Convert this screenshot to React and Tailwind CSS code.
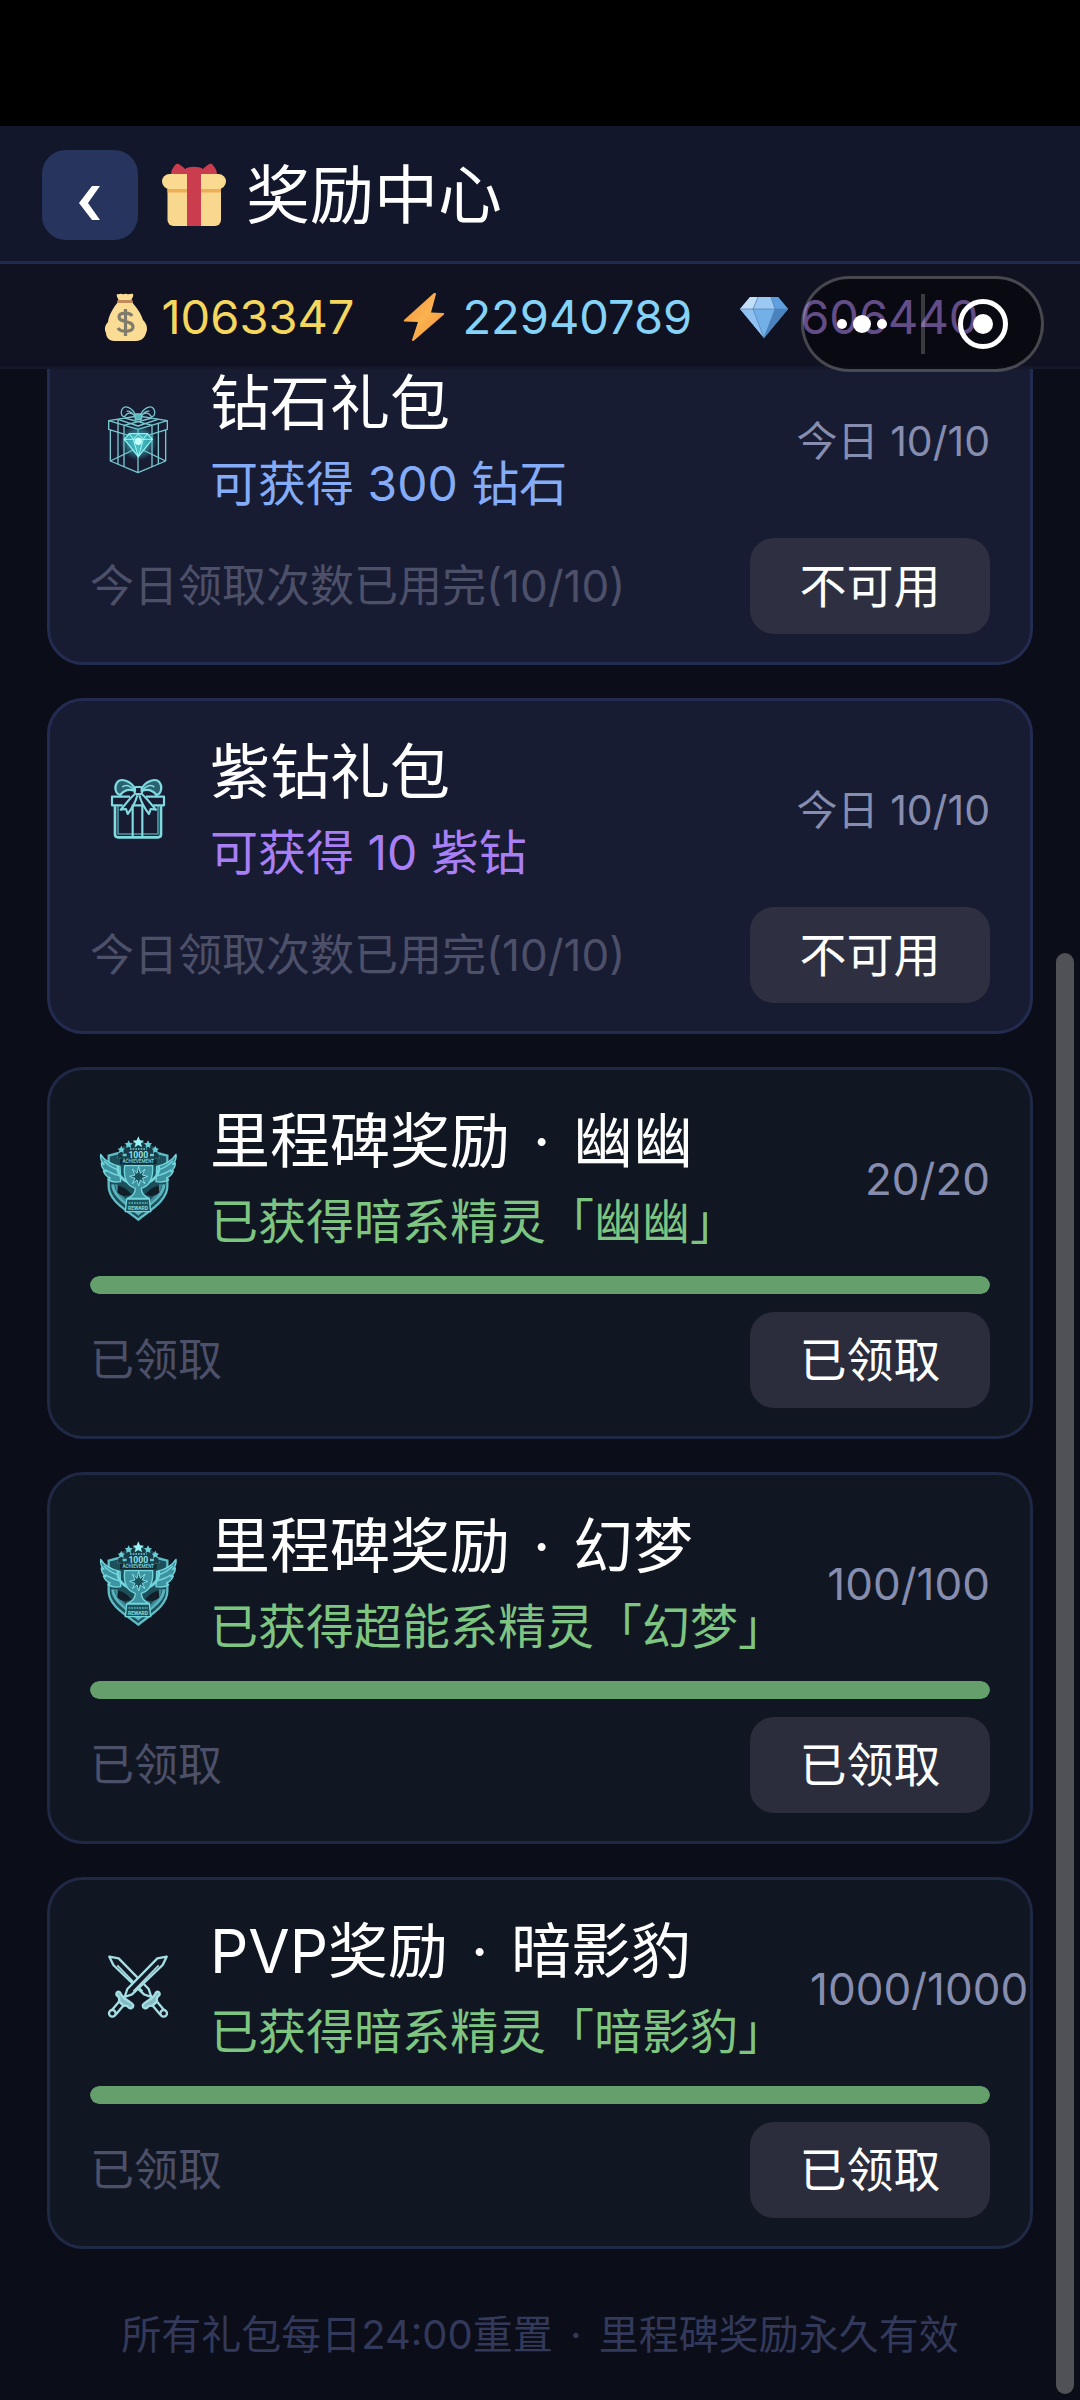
import React from "react";

function GiftEmoji() {
  return (
    <svg viewBox="0 0 64 64" className="size-16 shrink-0" aria-hidden="true">
      <rect x="5.500" y="18" width="53.500" height="45" rx="6" fill="#f8d88f" />
      <path d="M5.500 26h53.500v3.500H5.500z" fill="#eeae55" />
      <rect x="0" y="11" width="64" height="15" rx="7.500" fill="#f9da90" />
      <path d="M9 11c0-3 2-7 5-10 2-1 5 1 9 5 4-3 14-3 18 0 4-4 7-6 9-5 3 3 5 7 5 10z" fill="#c93d4e" />
      <path d="M25 11h14v52H25z" fill="#c93d4e" />
    </svg>
  );
}

function MoneyBag() {
  return (
    <svg viewBox="0 0 48 48" className="size-12 shrink-0" aria-hidden="true">
      <path d="M15 1c2 1 3-1 5 0 2 1 3-1 5 0 2 1 4-1 6 0 1 2-1 4-2 7H17c-1-3-3-5-2-7z" fill="#fbdc94" />
      <path d="M16 9h14c4 5 9 11 11 18 4 4 5 9 3 13-1 4-4 8-10 8H12c-5 0-8-4-8-8-2-4-1-8 2-11 1-8 6-15 10-20z" fill="#fbdc94" />
      <rect x="15" y="7" width="16" height="3" rx="1.500" fill="#c08a5a" />
      <path d="M30 23c-2-4-13-4-13 1 0 6 14 3 14 10 0 5-12 6-15 1M23.500 16v27" fill="none" stroke="#7f7b6d" strokeWidth="3.200" />
    </svg>
  );
}

function Bolt() {
  return (
    <svg viewBox="0 0 48 48" className="size-12 shrink-0" aria-hidden="true">
      <defs>
        <linearGradient id="bolt" x1="0" y1="0" x2="1" y2="1">
          <stop offset="0" stopColor="#f58f3c" />
          <stop offset="0.500" stopColor="#fbb350" />
          <stop offset="1" stopColor="#f08c3a" />
        </linearGradient>
      </defs>
      <path d="M32 0 2 27c-.5 1 0 1.500 1 1.500l13 .5-6 18c0 1 1 1.500 2 .5l30-26c.5-1 0-1.500-1-1.500l-12-.5L34 1c0-1-1-1.500-2-1z" fill="url(#bolt)" />
    </svg>
  );
}

function Gem() {
  return (
    <svg viewBox="0 0 48 48" className="size-12 shrink-0" aria-hidden="true">
      <path d="M10 4h28l10 12-24 29L0 16z" fill="#74b0e8" />
      <path d="M10 4h8l-5 12H0z" fill="#c3def7" />
      <path d="M18 4h13l4 12H13z" fill="#9cc9f3" />
      <path d="M31 4h7l10 12H35z" fill="#5f9fe0" />
      <path d="M0 16h13l11 29z" fill="#8fc1f1" />
      <path d="M48 16H35L24 45z" fill="#4a82bd" />
      <path d="M0 16h48M18 4l-5 12 11 29 11-29-4-12" fill="none" stroke="#4f7fb4" strokeWidth="0.700" />
    </svg>
  );
}

function DiamondBox() {
  return (
    <svg viewBox="0 9 288 288" className="size-24 shrink-0" aria-hidden="true">
      <defs>
        <radialGradient id="glow">
          <stop offset="0" stopColor="#7ff0ee" stopOpacity="0.900" />
          <stop offset="0.600" stopColor="#3fb6bd" stopOpacity="0.500" />
          <stop offset="1" stopColor="#3fb6bd" stopOpacity="0" />
        </radialGradient>
      </defs>
      <g fill="none" stroke="#76c8ce" strokeWidth="4" strokeLinejoin="round">
        <path d="M56 92l88-14 88 14-88 26zM56 92v26l88 27 88-27V92M144 118v27M61 121v92l83 35 83-35v-92M144 145v103M61 213l83-40 83 40" />
        <path d="M84 88v40v95M102 106v27v98M186 106v27v98M205 99v28v95M84 88l60 20 60-20M104 84l82 22M186 84l-84 22" />
        <path d="M138 78c-10-24-34-36-42-20-6 14 0 22 8 22 8-14 20-14 34-2zM134 78c-8-10-18-16-24-14M150 78c10-24 34-36 42-20 6 14 0 22-8 22-8-14-20-14-34-2zM154 78c8-10 18-16 24-14" />
        <rect x="135" y="72" width="20" height="17" rx="4" fill="#58b6bd" />
      </g>
      <ellipse cx="145" cy="157" rx="56" ry="54" fill="url(#glow)" />
      <path d="M118 131h54l15 17-42 52-42-52z" fill="#3fbcc4" fillOpacity="0.700" stroke="#8ff0f0" strokeWidth="4" />
      <path d="M103 148h84M118 131l12 17 15-17 15 17 12-17M130 148l15 52 15-52" fill="none" stroke="#a5f6f4" strokeWidth="3" />
      <circle cx="145" cy="154" r="11" fill="#c4fffb" />
    </svg>
  );
}

function RibbonGift() {
  return (
    <svg viewBox="0 6 288 288" className="size-24 shrink-0" aria-hidden="true">
      <g fill="none" stroke="#80dbe0" strokeWidth="6.500" strokeLinejoin="round">
        <path d="M75 139v84q0 9 9 9h120q9 0 9-9v-84" strokeWidth="8" />
        <path d="M84 139v83h120v-83" stroke="#4a9aa6" strokeWidth="5" />
        <path d="M120 110H66v26h32M168 110h54v26h-32M128 136h34" />
        <path d="M128 134v98M157 134v98" />
        <path d="M135 86c-12-24-44-34-54-18-10 14-4 34 10 37 12-16 28-18 44-12z" fill="#2b6270" />
        <path d="M155 86c12-24 44-34 54-18 10 14 4 34-10 37-12-16-28-18-44-12z" fill="#2b6270" />
        <path d="M133 91c-12-14-26-18-36-10M157 91c12-14 26-18 36-10" strokeWidth="5" />
        <rect x="134" y="81" width="22" height="21" rx="4" />
        <path d="M134 103c-12 8-22 24-42 46l16-2 5 15c14-18 24-36 29-56M156 103c12 8 22 24 42 46l-16-2-5 15c-14-18-24-36-29-56" />
      </g>
    </svg>
  );
}

function TrophyBadge() {
  return (
    <svg viewBox="30 30 288 288" className="size-24 shrink-0" aria-hidden="true">
      <path d="M86 104l30-8h116l30 8v92c0 44-54 72-87 100-34-28-89-56-89-100z" fill="#1d4f5a" stroke="#5fbdc6" strokeWidth="7" />
      <path d="M98 190c2 36 44 60 77 88 33-28 75-52 77-88" fill="none" stroke="#59b4be" strokeWidth="9" />
      <path d="M108 190c4 28 20 42 34 54M242 190c-4 28-20 42-34 54" fill="none" stroke="#3f8c98" strokeWidth="8" />
      <path d="M112 112c2-26 26-48 63-48s61 22 63 48z" fill="#1a3a45" stroke="#37808c" strokeWidth="3" strokeDasharray="7 5" />
      <path d="M175 46l5 12 12 1-9 8 3 12-11-7-11 7 3-12-9-8 12-1z" fill="#9af4f5" />
      <path d="M146 58l4 8 8 1-6 6 1 8-7-4-7 4 1-8-6-6 8-1zM204 58l4 8 8 1-6 6 1 8-7-4-7 4 1-8-6-6 8-1zM124 74l4 8 7 1-5 5 1 8-7-4-7 4 1-8-5-5 7-1zM226 74l4 8 7 1-5 5 1 8-7-4-7 4 1-8-5-5 7-1z" fill="#6ad0d7" />
      <path d="M128 102h12M210 102h12" stroke="#62c8cf" strokeWidth="7" />
      <path d="M150 84h50" stroke="#57abb4" strokeWidth="6" strokeDasharray="5 3" />
      <text x="175" y="110" textAnchor="middle" fontSize="26" className="font-bold" fontFamily="Roboto, sans-serif" fill="#8be4e8">1000</text>
      <path d="M120 113h110v17H120z" fill="#122831" />
      <text x="175" y="127" textAnchor="middle" fontSize="14" className="font-bold" fontFamily="Roboto, sans-serif" fill="#78cdd4">ACHIEVEMENT</text>
      <g fill="#3d93a0" stroke="#74d6dd" strokeWidth="4" strokeLinejoin="round">
        <path d="M120 136c-20-4-44-14-58-36-2 14 4 24 10 30-4 0-6-2-8-4 0 12 6 20 14 26-4 0-6 0-8-2 4 10 12 18 20 20 0 4-4 6-6 6 12 8 28 8 38 6z" />
        <path d="M230 136c20-4 44-14 58-36 2 14-4 24-10 30 4 0 6-2 8-4 0 12-6 20-14 26 4 0 6 0 8-2-4 10-12 18-20 20 0 4 4 6 6 6-12 8-28 8-38 6z" />
        <path d="M72 120c14 16 28 22 46 28M76 146c14 10 26 14 42 18M278 120c-14 16-28 22-46 28M274 146c-14 10-26 14-42 18" fill="none" />
        <path d="M114 134c-4 22 12 48 44 54M236 134c4 22-12 48-44 54" fill="none" strokeWidth="8" />
        <path d="M134 134h84c2 34-8 60-34 68 0 14 6 24 24 30h-66c18-6 24-16 24-30-26-8-36-34-32-68z" />
      </g>
      <path d="M176 136l5 21 14-13-8 18 16 4-16 6 8 16-14-11-5 18-5-18-14 11 8-16-16-6 16-4-8-18 14 13z" fill="#1b4f5a" stroke="#83e2e7" strokeWidth="3" />
      <path d="M114 194c14 2 30 12 40 26-16 10-34 4-42-6zM236 194c-14 2-30 12-40 26 16 10 34 4 42-6z" fill="#121e28" />
      <path d="M140 234h68l4 38h-76z" fill="#1c525c" stroke="#72d3da" strokeWidth="4" />
      <text x="174" y="267" textAnchor="middle" fontSize="15" className="font-bold" fontFamily="Roboto, sans-serif" fill="#7ddbe0">REWARD</text>
      <path d="M146 246h58" stroke="#4ca0aa" strokeWidth="6" strokeDasharray="5 3" />
    </svg>
  );
}

function Sword() {
  return (
    <g fill="#131a26" stroke="#a5dfe4" strokeWidth="7" strokeLinejoin="round">
      <path d="M230 80l-28 5-90 92-8 24 22-8 92-88z" />
      <path d="M206 106l-76 78" fill="none" strokeWidth="5" />
      <path d="M80 188c4-6 12-2 12 4l10 12 12 8c6 4 14 8 16 14 0 8-10 12-15 6-2-4-8-6-14-4l-14-14c2-8 2-12-4-16-4-2-5-6-3-10z" fill="#85bcc4" />
      <path d="M88 214l-24 28M101 226l-24 28" />
      <circle cx="67" cy="250" r="10" />
    </g>
  );
}

function CrossedSwords() {
  return (
    <svg viewBox="0 33 288 288" className="size-24 shrink-0" aria-hidden="true">
      <g transform="matrix(-1 0 0 1 288 0)">
        <Sword />
      </g>
      <Sword />
    </svg>
  );
}

const resources = [
  { icon: MoneyBag, value: "1063347", tone: "text-[#f5d75e]" },
  { icon: Bolt, value: "22940789", tone: "text-[#85d3f8]" },
  { icon: Gem, value: "606440", tone: "text-[#b48cf5]" },
];

const rewards = [
  { icon: DiamondBox, name: ["钻石礼包"], note: "可获得 300 钻石", tone: "text-[#85acf8]", count: "今日 10/10", status: "今日领取次数已用完(10/10)", action: "不可用" },
  { icon: RibbonGift, name: ["紫钻礼包"], note: "可获得 10 紫钻", tone: "text-[#a97ff5]", count: "今日 10/10", status: "今日领取次数已用完(10/10)", action: "不可用" },
  { icon: TrophyBadge, name: ["里程碑奖励", "幽幽"], note: "已获得暗系精灵「幽幽」", tone: "text-[#7dc580]", count: "20/20", progress: 100, status: "已领取", action: "已领取" },
  { icon: TrophyBadge, name: ["里程碑奖励", "幻梦"], note: "已获得超能系精灵「幻梦」", tone: "text-[#7dc580]", count: "100/100", progress: 100, status: "已领取", action: "已领取" },
  { icon: CrossedSwords, name: ["PVP奖励", "暗影豹"], note: "已获得暗系精灵「暗影豹」", tone: "text-[#7dc580]", count: "1000/1000", progress: 100, status: "已领取", action: "已领取" },
];

function RewardCard({ item }) {
  const Icon = item.icon;
  const milestone = item.progress !== undefined;
  return (
    <article
      className={`shrink-0 rounded-[36px] border-[3px] px-10 py-7 ${
        milestone ? "border-[#1f2844] bg-[#111722]" : "border-[#232c50] bg-[#181c33]"
      }`}
    >
      <div className="flex items-center gap-6">
        <Icon />
        <div className="flex-1 whitespace-nowrap">
          <h2 className="text-[60px] leading-[86px] text-white">
            {item.name[0]}
            {item.name[1] && (
              <>
                <span className="mx-1.5"> · </span>
                {item.name[1]}
              </>
            )}
          </h2>
          <p className={`text-[48px] leading-[76px] ${item.tone}`}>{item.note}</p>
        </div>
        <span className={`shrink-0 whitespace-nowrap leading-[60px] text-[#868daf] ${milestone ? "text-[44px]" : "text-[41px]"}`}>
          {item.count}
        </span>
      </div>
      {milestone && (
        <div
          role="progressbar"
          aria-label={item.name.join(" · ")}
          aria-valuenow={item.progress}
          className="mt-4 h-[18px] overflow-hidden rounded-full bg-[#1f2a3a]"
        >
          <div className="h-full rounded-full bg-[#659f6c]" style={{ width: `${item.progress}%` }} />
        </div>
      )}
      <div className={`flex items-center justify-between ${milestone ? "mt-[18px]" : "mt-4"}`}>
        <span className="text-[44px] leading-[60px] text-[#4d5069]">{item.status}</span>
        <button
          type="button"
          className={`h-24 w-60 rounded-3xl text-[47px] leading-[60px] text-white ${milestone ? "bg-[#2b2d3c]" : "bg-[#2e3041]"}`}
        >
          {item.action}
        </button>
      </div>
    </article>
  );
}

export default function App() {
  return (
    <div className="relative flex h-screen flex-col overflow-hidden bg-[#0b0d19] font-[Inter,'Noto_Sans_CJK_SC',sans-serif]">
      <div className="h-[126px] shrink-0 bg-black" />
      <header className="flex shrink-0 items-center gap-6 border-b-[3px] border-[#1f2d4d] bg-[#12172b] px-[42px] pt-6 pb-[21px]">
        <button type="button" aria-label="返回" className="flex h-[90px] w-24 items-center justify-center rounded-3xl bg-[#27345d]">
          <svg viewBox="0 0 24 36" className="mt-4 h-9 w-6" aria-hidden="true">
            <path d="M14 1h8L10 18l12 17h-8L1 18z" fill="#fff" />
          </svg>
        </button>
        <div className="flex items-center gap-5">
          <GiftEmoji />
          <h1 className="text-[64px] leading-[90px] text-white">奖励中心</h1>
        </div>
      </header>
      <section className="z-10 flex h-[105px] shrink-0 items-center justify-center gap-12 border-b-[3px] border-[#15172a] bg-[#111221] pt-1">
        {resources.map(({ icon: Icon, value, tone }) => (
          <div key={value} className="flex items-center gap-3">
            <Icon />
            <span className={`text-[47px] leading-[60px] ${tone}`}>{value}</span>
          </div>
        ))}
      </section>
      <main className="flex min-h-0 flex-1 flex-col justify-end gap-[33px] px-[47px]">
        {rewards.map((item) => (
          <RewardCard key={item.name.join()} item={item} />
        ))}
        <p className="mt-5 mb-8 shrink-0 text-center text-[40px] leading-[66px] text-[#32395a]">
          所有礼包每日24:00重置<span className="mx-1.5"> · </span>里程碑奖励永久有效
        </p>
      </main>
      <div className="absolute top-[953px] right-1.5 bottom-1.5 w-[18px] rounded-full bg-[#505156]" />
      <div className="absolute top-[276px] right-9 z-20 flex h-24 w-[243px] items-center rounded-full border-[3px] border-white/25 bg-black/45">
        <button type="button" aria-label="更多" className="flex flex-1 items-center justify-center gap-1.5">
          <span className="size-2.5 rounded-full bg-white" />
          <span className="size-[18px] rounded-full bg-white" />
          <span className="size-2.5 rounded-full bg-white" />
        </button>
        <span className="h-[60px] w-1 bg-white/20" />
        <button type="button" aria-label="关闭" className="flex flex-1 items-center justify-center">
          <span className="flex size-[50px] items-center justify-center rounded-full border-[5px] border-white">
            <span className="size-5 rounded-full bg-white" />
          </span>
        </button>
      </div>
    </div>
  );
}
